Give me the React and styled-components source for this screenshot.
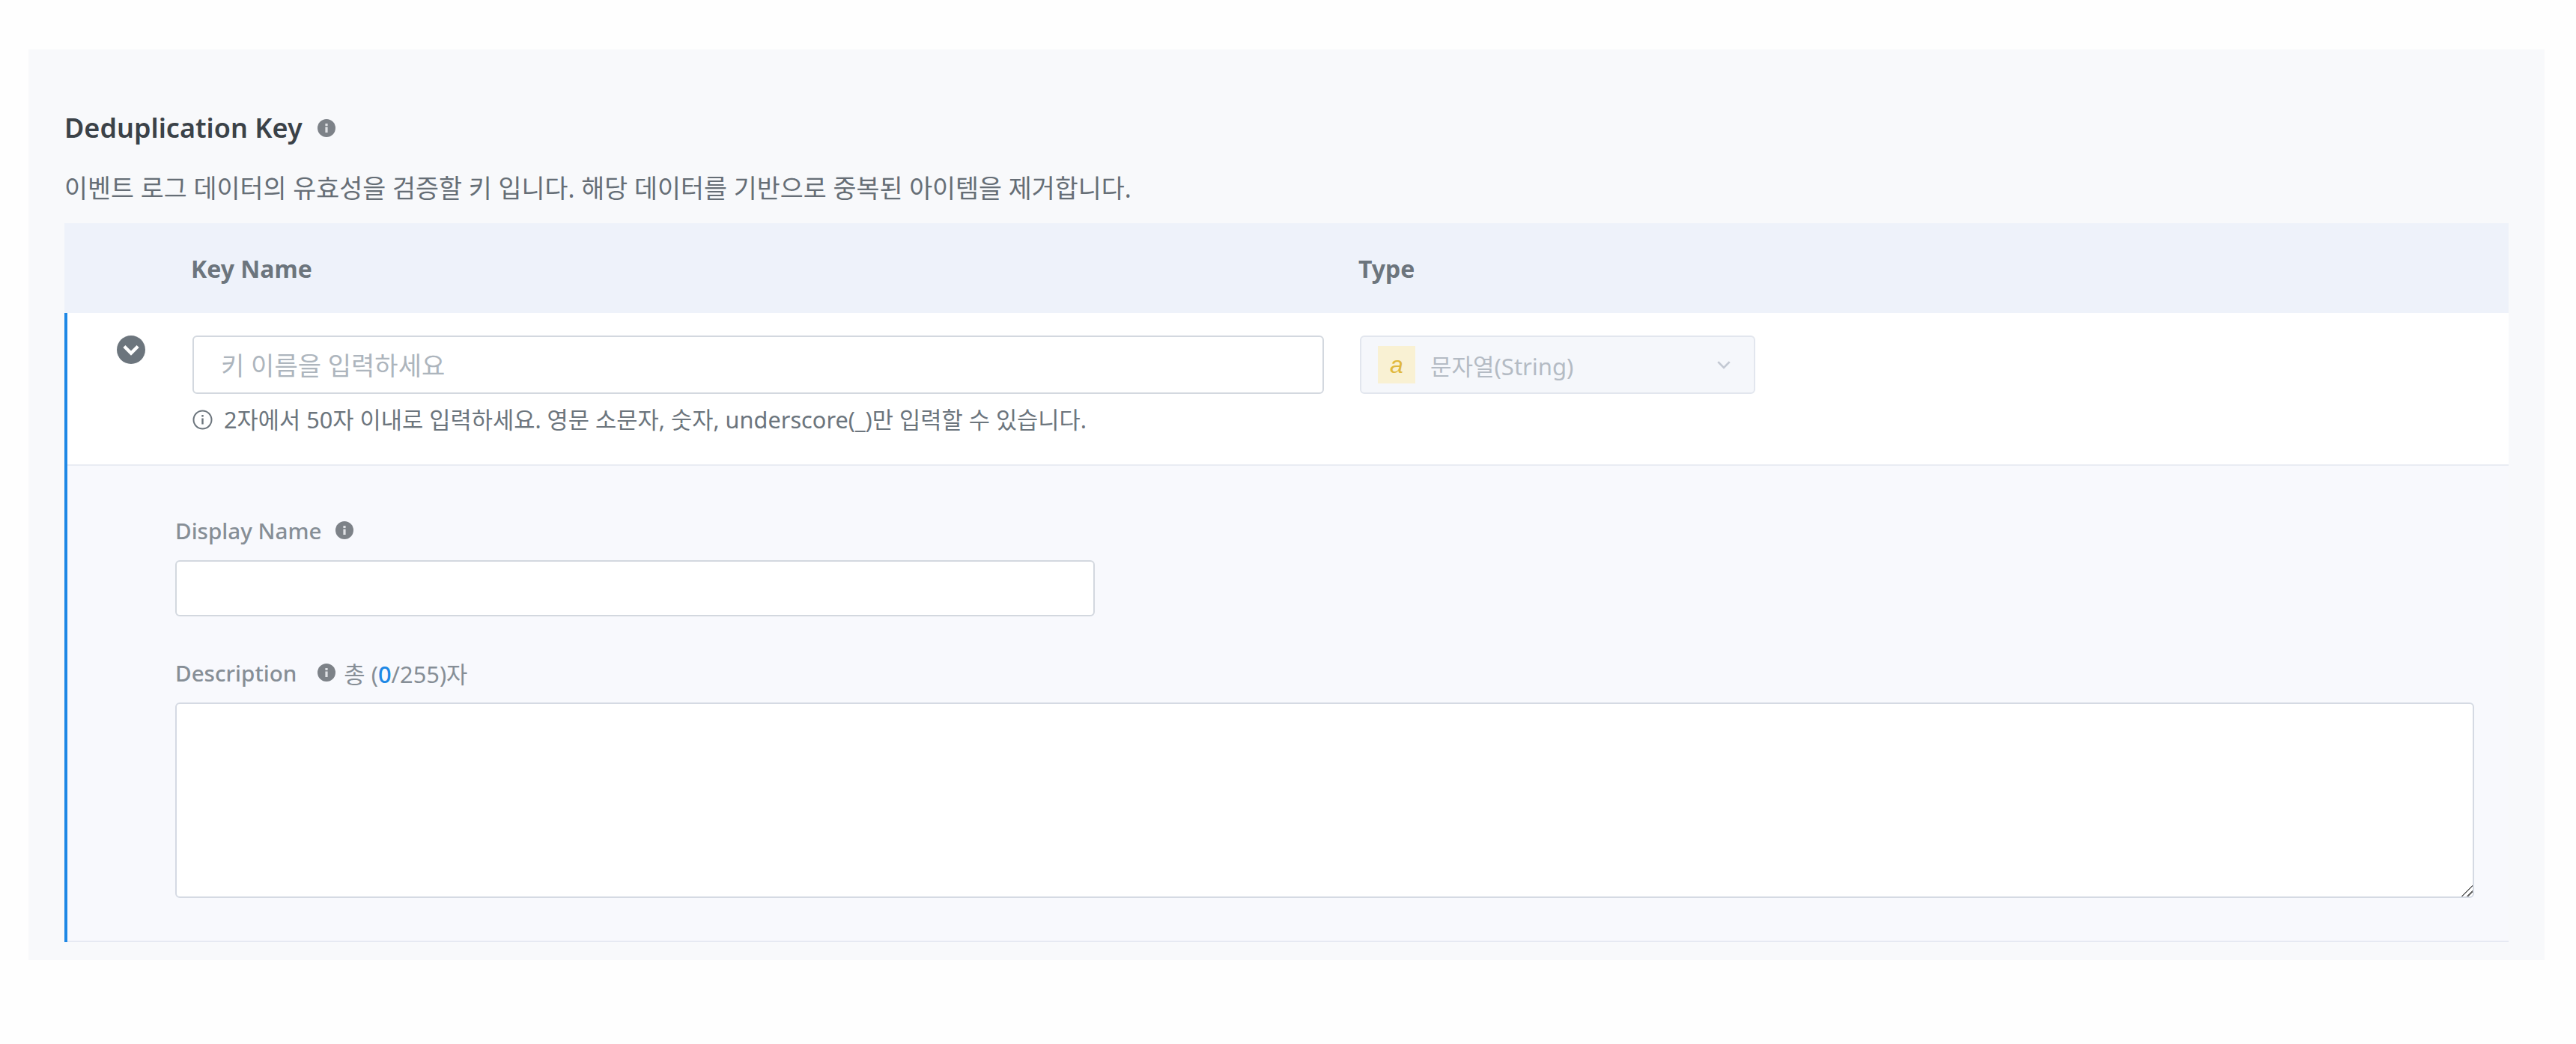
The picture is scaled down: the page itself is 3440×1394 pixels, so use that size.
import React from "react"
import styled, { createGlobalStyle } from "styled-components"

const GlobalStyle = createGlobalStyle`
    html, body {
        margin: 0;
        padding: 0;
        background: #fefefe;
        font-family: "Noto Sans", "Noto Sans CJK KR", sans-serif;
    }
`

const Page = styled.div`
    width: 3440px;
    height: 1394px;
    padding: 66px 42px 0 38px;
    box-sizing: border-box;
`

const Panel = styled.section`
    height: 1216px;
    padding: 81px 48px 0;
    box-sizing: border-box;
    background: #f8f9fb;
`

const TitleRow = styled.div`
    display: flex;
    align-items: center;
    gap: 20px;
    height: 48px;
`

const Title = styled.h2`
    margin: 0;
    font-size: 36px;
    font-weight: 600;
    line-height: 48px;
    color: #3b4248;
`

const Description = styled.p`
    margin: 33px 0 0;
    font-size: 33.7px;
    line-height: 47px;
    font-weight: 400;
    color: #666e76;
`

const TableHead = styled.div`
    display: grid;
    grid-template-columns: 169px 1559px 1fr;
    align-items: center;
    height: 120px;
    margin-top: 23px;
    background: #eef2fa;
`

const HeadCell = styled.div`
    grid-column: ${props => props.$col};
    font-size: 32px;
    font-weight: 700;
    color: #6c757d;
`

const Row = styled.div`
    border-left: 4px solid #1e88e5;
`

const KeyRow = styled.div`
    display: grid;
    grid-template-columns: 167px 1511px 48px 528px;
    align-items: start;
    height: 204px;
    padding-top: 30px;
    box-sizing: border-box;
    background: #ffffff;
    border-bottom: 2px solid #e9ecf3;
`

const ToggleCell = styled.div`
    padding-left: 66px;
`

const Toggle = styled.span`
    display: flex;
    align-items: center;
    justify-content: center;
    width: 38px;
    height: 38px;
    border-radius: 50%;
    background: #6c757d;
`

const TextInput = styled.input`
    display: block;
    box-sizing: border-box;
    width: 100%;
    height: ${props => props.$height}px;
    padding: 2px 36px 0;
    border: 2px solid #d3d8df;
    border-radius: 6px;
    background: #ffffff;
    outline: none;
    font-family: inherit;
    font-size: 34px;
    color: #495057;

    &::placeholder {
        color: #adb5bd;
        opacity: 1;
    }
`

const Hint = styled.div`
    display: flex;
    align-items: center;
    gap: 15px;
    margin-top: 14px;
    font-size: 30.7px;
    line-height: 40px;
    color: #6c757d;
`

const SelectBox = styled.div`
    display: flex;
    align-items: center;
    box-sizing: border-box;
    height: 78px;
    padding: 0 29px 0 22px;
    border: 2px solid #e2e6ee;
    border-radius: 6px;
    background: #f5f7fb;
`

const TypeBadge = styled.span`
    display: flex;
    align-items: center;
    justify-content: center;
    flex: none;
    width: 50px;
    height: 50px;
    background: #f9f1d3;
    font-family: "Liberation Sans", sans-serif;
    font-size: 32px;
    font-style: italic;
    color: #e0b83c;
`

const SelectText = styled.span`
    flex: 1;
    margin-left: 20px;
    font-size: 31px;
    color: #b4bbc4;
`

const Details = styled.div`
    height: 636px;
    padding: 64px 46px 0 144px;
    box-sizing: border-box;
    background: #f8f9fd;
    border-bottom: 2px solid #e6e9f2;
`

const FieldLabel = styled.div`
    display: flex;
    align-items: center;
    height: 44px;
    font-size: 29.6px;
    font-weight: 500;
    color: #868e96;
`

const LabelIcon = styled.span`
    display: flex;
    margin-left: ${props => props.$gap}px;
`

const Counter = styled.span`
    margin-left: 11px;
    font-size: 30.8px;
    font-weight: 400;
    color: #868e96;
`

const Count = styled.b`
    font-weight: 500;
    color: #1e88e5;
`

const ShortField = styled.div`
    width: 1228px;
    margin-top: 18px;
`

const DescLabel = styled(FieldLabel)`
    margin-top: 53px;
`

const TextArea = styled.textarea`
    display: block;
    box-sizing: border-box;
    width: 100%;
    height: 261px;
    margin-top: 18px;
    border: 2px solid #d5dae3;
    border-radius: 6px;
    background: #ffffff;
    outline: none;

    &::-webkit-resizer {
        background: linear-gradient(135deg, transparent 0 48%, #666666 48% 56%, transparent 56% 73%, #666666 73% 81%, transparent 81%);
    }
`

const InfoFilled = () => (
    <svg width="24" height="24" viewBox="0 0 24 24">
        <circle cx="12" cy="12" r="12" fill="#7d8288" />
        <rect x="10.4" y="10.5" width="3.2" height="7.5" fill="#dfe1e4" />
        <rect x="10.4" y="6" width="3.2" height="3" fill="#dfe1e4" />
    </svg>
)

const InfoOutline = () => (
    <svg width="27" height="27" viewBox="0 0 27 27" fill="none">
        <circle cx="13.5" cy="13.5" r="12" stroke="#6c757d" strokeWidth="2" />
        <rect x="12.3" y="11.5" width="2.4" height="8" fill="#6c757d" />
        <rect x="12.3" y="7" width="2.4" height="2.6" fill="#6c757d" />
    </svg>
)

const ChevronDown = ({ size, color, weight }) => (
    <svg width={size} height={size} viewBox="0 0 20 20" fill="none">
        <path d="M3 6.5 L10 13.5 L17 6.5" stroke={color} strokeWidth={weight} />
    </svg>
)

const App = () => (
    <>
        <GlobalStyle />
        <Page>
            <Panel>
                <TitleRow>
                    <Title>Deduplication Key</Title>
                    <InfoFilled />
                </TitleRow>
                <Description>이벤트 로그 데이터의 유효성을 검증할 키 입니다. 해당 데이터를 기반으로 중복된 아이템을 제거합니다.</Description>
                <TableHead>
                    <HeadCell $col={2}>Key Name</HeadCell>
                    <HeadCell $col={3}>Type</HeadCell>
                </TableHead>
                <Row>
                    <KeyRow>
                        <ToggleCell>
                            <Toggle>
                                <ChevronDown size={26} color="#ffffff" weight={3.4} />
                            </Toggle>
                        </ToggleCell>
                        <div>
                            <TextInput $height={78} placeholder="키 이름을 입력하세요" />
                            <Hint>
                                <InfoOutline />
                                2자에서 50자 이내로 입력하세요. 영문 소문자, 숫자, underscore(_)만 입력할 수 있습니다.
                            </Hint>
                        </div>
                        <span />
                        <SelectBox>
                            <TypeBadge>a</TypeBadge>
                            <SelectText>문자열(String)</SelectText>
                            <ChevronDown size={22} color="#c3c9d3" weight={2.5} />
                        </SelectBox>
                    </KeyRow>
                    <Details>
                        <FieldLabel>
                            Display Name
                            <LabelIcon $gap={18}><InfoFilled /></LabelIcon>
                        </FieldLabel>
                        <ShortField>
                            <TextInput $height={75} />
                        </ShortField>
                        <DescLabel>
                            Description
                            <LabelIcon $gap={28}><InfoFilled /></LabelIcon>
                            <Counter>총 (<Count>0</Count>/255)자</Counter>
                        </DescLabel>
                        <TextArea />
                    </Details>
                </Row>
            </Panel>
        </Page>
    </>
)

export default App
